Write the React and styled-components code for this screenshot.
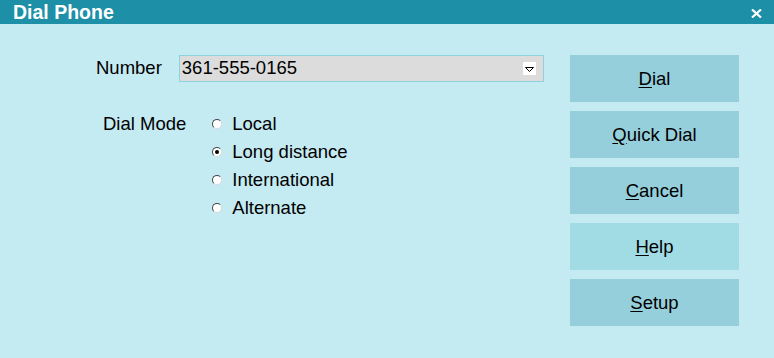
import React from 'react'
import styled, { createGlobalStyle } from 'styled-components'

const GlobalStyle = createGlobalStyle`
    html, body {
        margin: 0;
        padding: 0;
        background: #c4eaf2;
    }
    body {
        font-family: "Liberation Sans", Arial, sans-serif;
        color: #000;
    }
`

const Window = styled.div`
    width: 774px;
    height: 358px;
    background: #c4eaf2;
    overflow: hidden;
`

const TitleBar = styled.div`
    height: 24px;
    background: #1d8fa7;
    display: flex;
    align-items: center;
    justify-content: space-between;
    padding: 0 12px 0 13px;
    color: #fff;
`

const Title = styled.h1`
    margin: 0;
    font-size: 19.5px;
    font-weight: bold;
    line-height: 24px;
`

const CloseButton = styled.button`
    border: 0;
    background: none;
    padding: 0;
    width: 11px;
    height: 9px;
    display: flex;
    margin-top: 2px;
`

const Body = styled.div`
    display: flex;
    padding: 0 35px 0 0;
`

const Form = styled.div`
    flex: 1;
    display: flex;
    flex-direction: column;
`

const Row = styled.div`
    display: flex;
    align-items: ${p => p.$align || 'center'};
    padding-left: ${p => p.$indent}px;
    margin-top: ${p => p.$top}px;
    gap: ${p => p.$gap}px;
`

const Label = styled.span`
    font-size: 18.5px;
    line-height: 28px;
`

const Select = styled.div`
    width: 354px;
    height: 25px;
    border: 1px solid #8ed1df;
    background: #dcdcdc;
    display: flex;
    align-items: center;
    justify-content: space-between;
    padding: 0 7px 0 2px;
    font-size: 18.5px;
    box-sizing: content-box;
`

const ArrowBox = styled.span`
    width: 13px;
    height: 13px;
    background: #fff;
    display: flex;
`

const RadioGroup = styled.div`
    display: flex;
    flex-direction: column;
`

const RadioRow = styled.label`
    display: flex;
    align-items: center;
    height: 28px;
    font-size: 18.5px;
    gap: 10px;
`

const RadioDot = styled.span`
    width: 10px;
    height: 10px;
    border-radius: 50%;
    box-sizing: border-box;
    background: #fff;
    border: 1px solid;
    border-color: #444 #d8d8d8 #d8d8d8 #444;
    display: flex;
    align-items: center;
    justify-content: center;
    &::after {
        content: '';
        width: 4px;
        height: 4px;
        border-radius: 50%;
        background: ${p => (p.$checked ? '#000' : 'transparent')};
    }
`

const Buttons = styled.div`
    display: flex;
    flex-direction: column;
    gap: 9px;
    margin-top: 31px;
`

const Button = styled.button`
    width: 169px;
    height: 47px;
    border: 0;
    background: ${p => (p.$focused ? '#a1dce5' : '#95cfdb')};
    font-family: "Liberation Sans", Arial, sans-serif;
    font-size: 18.5px;
    color: #000;
    padding: 0;
    u {
        text-underline-offset: 2px;
    }
`

const modes = ['Local', 'Long distance', 'International', 'Alternate']

const buttons = [
    { key: 'D', rest: 'ial' },
    { key: 'Q', rest: 'uick Dial' },
    { key: 'C', rest: 'ancel' },
    { key: 'H', rest: 'elp', focused: true },
    { key: 'S', rest: 'etup' },
]

export default function App() {
    return (
        <Window>
            <GlobalStyle />
            <TitleBar>
                <Title>Dial Phone</Title>
                <CloseButton aria-label='close'>
                    <svg width='11' height='9' viewBox='0 0 11 9'>
                        <path d='M1 0.5 L10 8.5 M10 0.5 L1 8.5' stroke='#fff' strokeWidth='2.2' />
                    </svg>
                </CloseButton>
            </TitleBar>
            <Body>
                <Form>
                    <Row $indent={96} $top={30} $gap={17}>
                        <Label>Number</Label>
                        <Select>
                            <span>361-555-0165</span>
                            <ArrowBox>
                                <svg width='13' height='13' viewBox='0 0 13 13'>
                                    <path d='M2.5 5.5 H10.5 L6.5 9.5 Z' fill='none' stroke='#000' strokeWidth='1' />
                                </svg>
                            </ArrowBox>
                        </Select>
                    </Row>
                    <Row $indent={103} $top={28} $gap={26} $align='flex-start'>
                        <Label>Dial Mode</Label>
                        <RadioGroup>
                            {modes.map(m => (
                                <RadioRow key={m}>
                                    <RadioDot $checked={m === 'Long distance'} />
                                    {m}
                                </RadioRow>
                            ))}
                        </RadioGroup>
                    </Row>
                </Form>
                <Buttons>
                    {buttons.map(b => (
                        <Button key={b.key} $focused={b.focused}>
                            <u>{b.key}</u>{b.rest}
                        </Button>
                    ))}
                </Buttons>
            </Body>
        </Window>
    )
}
